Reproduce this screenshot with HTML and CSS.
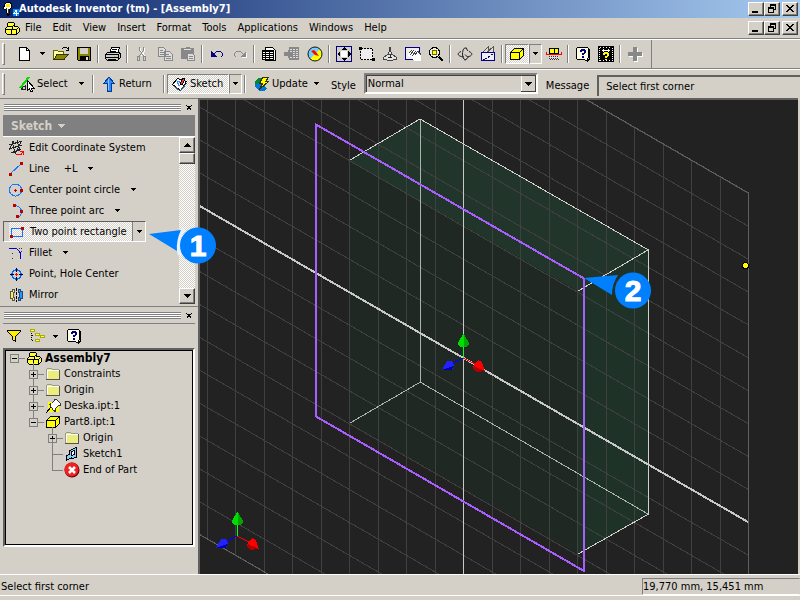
FILE: index.html
```
<!DOCTYPE html>
<html lang="en">
	<head>
		<meta charset="utf-8" />
		<title>Autodesk Inventor (tm) - [Assembly7]</title>
		<link rel="stylesheet" href="styles.css">
	</head>
	<body>
		<!-- shared symbols -->
		<svg class="defs" width="0" height="0" aria-hidden="true">
			<symbol id="assembly" viewBox="0 0 16 16">
				<path d="M1 9l2-2V4l2-2h4l1 1v3h3l2 2v4l-2 2H3l-2-2z" fill="#ff3" stroke="#000" />
				<path d="M1.500 9.500h11l2-2M7.500 9.500v5M3.500 6.500h5l2-2M8.500 6.500v3M12.500 9.500v4" fill="none" stroke="#000" />
			</symbol>
			<symbol id="cube" viewBox="0 0 16 16">
				<path d="M1.500 6.500l4-4h9v7l-4 4h-9z" fill="#ff0" stroke="#000" />
				<path d="M1.500 6.500h9l4-4M10.500 6.500v7" fill="none" stroke="#000" />
			</symbol>
			<symbol id="folder" viewBox="0 0 16 16">
				<path d="M1 4l1-1V2h5l1 2h6v10H1z" fill="#eded7c" />
				<path d="M1.500 13V3.500l1-1h4l1 1h6" fill="none" stroke="#999" />
				<path d="M2.500 12V4.500h11" fill="none" stroke="#fff" />
				<path d="M1 13.500h13.500V4" fill="none" stroke="#555" />
			</symbol>
			<symbol id="help" viewBox="0 0 16 16">
				<path d="M2.500 1.500h10l1 1v9l-1 1v3l-3-2h-7l-1-1v-10z" fill="#ffffe8" stroke="#000" />
				<path d="M14.500 3v10h-1v2" fill="none" stroke="#000" />
				<path d="M5 5V4h1V3h4v1h1v3h-1v1H9v1H7V7h2V5H7v1H5zM7 10h2v2H7z" fill="#000080" />
			</symbol>
			<symbol id="down" viewBox="0 0 5 3">
				<path d="M0 0h5v1H4v1H3v1H2V2H1V1H0z" fill="#000" />
			</symbol>
			<symbol id="min" viewBox="0 0 10 10"><path d="M1 7h6v2H1z" /></symbol>
			<symbol id="restore" viewBox="0 0 10 10">
				<path d="M3 0h6v6H7V5h1V2H4v1H3zM1 3h6v6H1zM2 5v3h4V5z" fill-rule="evenodd" />
			</symbol>
			<symbol id="close" viewBox="0 0 10 10">
				<path d="M1 1h2v1h1v1h2V2h1V1h2v1H8v1H7v1H6v1h1v1h1v1h1v1H7V7H6V6H4v1H3v1H1V7h1V6h1V5h1V4H3V3H2V2H1z" />
			</symbol>
			<symbol id="triad" viewBox="-25 -25 50 50">
				<path d="M.5 0v-15" stroke="#0f2" />
				<path d="M0 0l12 6" stroke="#f00" />
				<path d="M0 0l-13 7" stroke="#00f" />
				<path d="M0-24h1l5 9v2l-3 2h-5l-3-2v-2z" fill="#0d0" />
				<path d="M1-24l5 9v2l-3 2h-2z" fill="#00a800" />
				<path d="M15 2l4 2 3 9-9 1-3-3 1-5z" fill="#f00" />
				<path d="M11 8l11 5-9 1-3-3z" fill="#b00000" />
				<path d="M-16 3h5l2 4-2 5h-10z" fill="#22f" />
				<path d="M-10 8l-1 4h-10z" fill="#0000a8" />
			</symbol>
		</svg>

		<header class="titlebar">
			<svg class="app-icon" viewBox="0 0 18 18">
				<path d="M3.500 4.500l2-2h4l1 2v3l-2 2v5l-2 1-1-5-3-2z" fill="#fff" stroke="#000" />
				<path d="M5 4h4v3H5z" fill="#fe0" />
				<path d="M5.500 8v2M7.500 9v5" stroke="#333" />
				<path d="M12 9h6v7h-6z" fill="#08f" />
				<path d="M15.500 10v6M15 10.500l-2 3h5" stroke="#fff" fill="none" />
			</svg>
			<h1>Autodesk Inventor (tm) - [Assembly7]</h1>
			<div class="window-buttons">
				<button aria-label="Minimize"><svg><use href="#min" /></svg></button>
				<button aria-label="Restore"><svg><use href="#restore" /></svg></button>
				<button class="close" aria-label="Close"><svg><use href="#close" /></svg></button>
			</div>
		</header>

		<nav class="menubar">
			<svg class="icon"><use href="#assembly" /></svg>
			<button>File</button>
			<button>Edit</button>
			<button>View</button>
			<button>Insert</button>
			<button>Format</button>
			<button>Tools</button>
			<button>Applications</button>
			<button>Windows</button>
			<button>Help</button>
			<div class="window-buttons">
				<button aria-label="Minimize"><svg><use href="#min" /></svg></button>
				<button aria-label="Restore"><svg><use href="#restore" /></svg></button>
				<button class="close" aria-label="Close"><svg><use href="#close" /></svg></button>
			</div>
		</nav>

		<div class="toolbar-row">
			<div class="toolbar standard">
				<span class="grip"></span>
				<button class="tool" aria-label="New">
					<svg class="icon" viewBox="0 0 16 16"><path d="M2.500 1.500h7l3 3v10h-10z" fill="#fff" stroke="#000" /><path d="M9.500 1.500v3h3" fill="none" stroke="#000" /></svg>
				</button>
				<button class="arrow" aria-label="New options"><svg><use href="#down" /></svg></button>
				<button class="tool" aria-label="Open">
					<svg class="icon" viewBox="0 0 16 16"><path d="M.5 13.500v-9h4l1 1h5v3" fill="#ffa" stroke="#660" /><path d="M1 13.500l3-5h11l-4 5z" fill="#880" stroke="#330" /><path d="M9 3l2-2h2l2 2M15.500 1v3h-3" fill="none" stroke="#000" /></svg>
				</button>
				<button class="tool" aria-label="Save">
					<svg class="icon" viewBox="0 0 16 16"><path d="M1.500 1.500h13v13h-12l-1-1z" fill="#880" stroke="#000" /><path d="M4 2h8v6H4z" fill="#d4d0c8" /><path d="M4 10h9v4H4z" fill="#000" /><path d="M10 11h2v3h-2z" fill="#ddd" /></svg>
				</button>
				<span class="sep"></span>
				<button class="tool" aria-label="Print">
					<svg class="icon" viewBox="0 0 16 16"><path d="M4.500 7.500l2-6h8l-2 6" fill="#fff" stroke="#000" /><path d="M7 3.500h5M6 5.500h5" stroke="#000" /><path d="M.5 8.500l2-2h11l2 1v4l-3 3h-10l-2-2z" fill="#ccc" stroke="#000" /><path d="M1 8.500h12M1 11.500h12M13.500 8v6M3 13.500h8" stroke="#000" /><path d="M9 10.500h2" stroke="#cc0" /></svg>
				</button>
				<span class="sep"></span>
				<button class="tool" aria-label="Cut" disabled>
					<svg class="icon" viewBox="0 0 16 16"><path d="M6.500 2v3l4 5M10.500 2v3l-3 5" fill="none" stroke="#fff" /><path d="M5.500 1v3l4 6M9.500 1v3l-4 6" fill="none" stroke="#888" /><path d="M3.500 10.500h2v4h-2zM9.500 10.500h2v4h-2z" fill="none" stroke="#888" /></svg>
				</button>
				<button class="tool" aria-label="Copy" disabled>
					<svg class="icon" viewBox="0 0 16 16"><path d="M1.500 1.500h5l2 2v7h-7zM7.500 5.500h5l3 3v6h-8z" fill="#ddd" stroke="#888" /><path d="M3 4.500h3M3 6.500h4M3 8.500h4M9 8.500h3M9 10.500h5M9 12.500h5" stroke="#888" /></svg>
				</button>
				<button class="tool" aria-label="Paste" disabled>
					<svg class="icon" viewBox="0 0 16 16"><path d="M1 2h4l1-1h3l1 1h4v11H1z" fill="#888" /><path d="M4 3.500h7" stroke="#ddd" /><path d="M7.500 7.500h5l2 2v5h-7z" fill="#ddd" stroke="#888" /><path d="M9 10.500h4M9 12.500h4" stroke="#888" /></svg>
				</button>
				<span class="sep"></span>
				<button class="tool" aria-label="Undo">
					<svg class="icon" viewBox="0 0 16 16"><path d="M2 5v6h6z" fill="#000080" /><path d="M4.500 8.500l3-3h4l2 2v2l-2 2" fill="none" stroke="#000080" /></svg>
				</button>
				<button class="tool" aria-label="Redo" disabled>
					<svg class="icon" viewBox="0 0 16 16"><path d="M15 6v6H9z" fill="#fff" /><path d="M14 5v6H8z" fill="#888" /><path d="M11.500 8.500l-3-3h-4l-2 2v2l2 2" fill="none" stroke="#888" /></svg>
				</button>
				<span class="sep"></span>
				<button class="tool" aria-label="Parameters">
					<svg class="icon" viewBox="0 0 16 16"><path d="M4.500 1.500h7l3 3v10h-10z" fill="#fff" stroke="#000" /><path d="M1 4h12v10H1z" fill="#000" /><path d="M2 6.500h2M5 6.500h3M9 6.500h3M2 8.500h2M5 8.500h3M9 8.500h3M2 10.500h2M5 10.500h3M9 10.500h3M2 12.500h2M5 12.500h3M9 12.500h3" stroke="#fff" /></svg>
				</button>
				<button class="tool" aria-label="Import table" disabled>
					<svg class="icon" viewBox="0 0 16 16"><path d="M5 1h10v13H5z" fill="#888" /><path d="M6 3.500h2M9 3.500h2M12 3.500h2M6 5.500h2M9 5.500h2M12 5.500h2M9 7.500h2M12 7.500h2M9 9.500h2M12 9.500h2M6 11.500h2M9 11.500h2M12 11.500h2" stroke="#ddd" /><path d="M0 6h4V4l4 4-4 4v-2H0z" fill="#888" /></svg>
				</button>
				<button class="tool" aria-label="Catalog">
					<svg class="icon smooth" viewBox="0 0 16 16"><circle cx="8" cy="8" r="7" fill="#7cf" /><path d="M13 3a7 7 0 0 1-10 10z" fill="#ff0" /><circle cx="8" cy="8" r="7" fill="none" stroke="#111" /><path d="M4 5l3-1 2 2 3 4-4-1-3-3z" fill="#f00" /></svg>
				</button>
				<span class="sep"></span>
				<button class="tool" aria-label="Zoom all">
					<svg class="icon" viewBox="0 0 16 16"><path d="M.5.5h15v15H.5z" fill="#d4d0c8" stroke="#000080" /><path d="M5 5h6v6H5z" fill="#fff" /><path d="M8 1l3 3H5zM8 15l3-3H5zM1 8l3-3v6zM15 8l-3-3v6z" /></svg>
				</button>
				<button class="tool" aria-label="Zoom window">
					<svg class="icon" viewBox="0 0 16 16"><path d="M1.500 2.500h12v11h-12z" fill="#eee" stroke="#000" stroke-dasharray="2 1" /><path d="M0 1h3v3H0zM13 12h3v3h-3z" /></svg>
				</button>
				<button class="tool" aria-label="Zoom">
					<svg class="icon" viewBox="0 0 16 16"><path d="M7.500 1.500h1v4h-1zM7.500 5.500l-2 3h5l-2-3zM5.500 8.500l-4 3v2h3l1 1h5l1-1h3v-2l-4-3z" fill="#e4e4e4" stroke="#444" /><path d="M8 9v3M6 11.500h4" fill="none" stroke="#222" /></svg>
				</button>
				<button class="tool" aria-label="Pan">
					<svg class="icon" viewBox="0 0 16 16"><path d="M.5 1.500h14v12H.5z" fill="#eee" stroke="#000080" /><path d="M4 11l-1-3 4-4 2 1 4-1 3 5v6H9l-3-5z" fill="#fff" /><path d="M4 7l3-3M5 9l4-5M7 10l4-5M10 9l3-4M13 5l3 4" stroke="#444" /></svg>
				</button>
				<button class="tool" aria-label="Zoom selected">
					<svg class="icon" viewBox="0 0 16 16"><circle cx="6.500" cy="6.500" r="5" fill="#eee" stroke="#000" /><path d="M4.500 4.500h4v4h-4z" fill="#ff0" stroke="#660" /><path d="M11 11l4 4" stroke="#000" stroke-width="2" /></svg>
				</button>
				<span class="sep"></span>
				<button class="tool" aria-label="Rotate">
					<svg class="icon smooth" viewBox="0 0 16 16"><path d="M10 2.500C7 .5 5.500 4 5.500 8s2 7 4 5M4 5.500c-5 2-3 5 3 5.500M8 8.500l3 3-3 3M10 11c6-1 6-4 2-5.500M9 2l2 3" fill="none" stroke="#222" /></svg>
				</button>
				<button class="tool" aria-label="Look at">
					<svg class="icon" viewBox="0 0 16 16"><path d="M1.500 6.500h13v8h-13z" fill="#eee" stroke="#000080" /><path d="M3 6l5-5v5M7 6l6-5v5" fill="#ddd" stroke="#555" /><path d="M3 13.500h2l8-6" fill="none" stroke="#000080" stroke-dasharray="2 1" /></svg>
				</button>
				<span class="sep"></span>
				<button class="tool pressed" aria-label="Shaded display"><svg class="icon"><use href="#cube" /></svg></button>
				<button class="arrow framed" aria-label="Display options"><svg><use href="#down" /></svg></button>
				<button class="tool" aria-label="Section view">
					<svg class="icon" viewBox="0 0 16 16"><path d="M3.500 2.500h9v5h-9z" fill="#ff0" stroke="#000" /><path d="M8 3v5" stroke="#000" /><path d="M3 10h10v4H3z" fill="#ddd" /><path d="M3 10.500h10M3 12.500h10M4 13.500h9" stroke="#333" stroke-dasharray="1 1" /><path d="M.5 6v2.500h15V6" fill="none" stroke="#f00" /></svg>
				</button>
				<span class="sep"></span>
				<button class="tool" aria-label="Help topics"><svg class="icon"><use href="#help" /></svg></button>
				<button class="tool" aria-label="Visual syllabus">
					<svg class="icon" viewBox="0 0 16 16"><path d="M0 0h16v16H0z" /><path d="M4 4.500h8M5.500 3v3M10.500 3v3" stroke="#fff" /><path d="M1.500 2v13M14.500 2v13" stroke="#fff" stroke-dasharray="1 1" /><path d="M2 1.500h12M2 14.500h12" stroke="#fff" stroke-dasharray="1 2" /><path d="M5 9V7h1V6h4v1h1v3h-1v1H9v1H7v-2h2V8H7v1zM7 13h2v1H7z" fill="#ff0" /></svg>
				</button>
				<span class="sep"></span>
				<button class="tool" aria-label="Add" disabled>
					<svg class="icon" viewBox="0 0 16 16"><path d="M7 2h4v5h5v4h-5v5H7v-5H2V7h5z" fill="#fff" /><path d="M6 1h4v5h5v4h-5v5H6v-5H1V6h5z" fill="#888" /></svg>
				</button>
			</div>
		</div>

		<div class="toolbar-row command-row">
			<span class="grip"></span>
			<button class="command select-button">
				<svg class="icon" viewBox="0 0 16 16"><path d="M1 12L10 1" stroke="#0d0" stroke-width="2" /><path d="M3.500 11.500l3-2v4h-4z" fill="none" stroke="#222" /><path d="M8.500 4.500v10l2-2 1 3h2l-1-3h3z" fill="#fff" stroke="#000" /></svg>
				Select
			</button>
			<button class="arrow" aria-label="Select options"><svg><use href="#down" /></svg></button>
			<span class="sep"></span>
			<button class="command return-button">
				<svg class="icon" viewBox="0 0 16 16"><path d="M8 1l5 6h-3v8H6V7H3z" fill="#38f" stroke="#003c9c" /><path d="M7.500 3v11" stroke="#8cf" /></svg>
				Return
			</button>
			<span class="sep"></span>
			<button class="command pressed sketch-button">
				<svg class="icon" viewBox="0 0 16 16"><path d="M.5 8.500l5-6 9 3-6 9z" fill="#fff" stroke="#000" /><path d="M2 10l6 5 7-8" fill="none" stroke="#357" /><path d="M5 5l5 2-3 3z" fill="none" stroke="#48f" /><path d="M8 8l3-6 2 1-3 6z" fill="#f33" stroke="#000" /></svg>
				Sketch
			</button>
			<button class="arrow framed" aria-label="Sketch options"><svg><use href="#down" /></svg></button>
			<span class="sep"></span>
			<button class="command update-button">
				<svg class="icon" viewBox="0 0 16 16"><path d="M1 5l3-3h5v9H2z" fill="#083" /><path d="M1 8l4-1 8 5-3 3H5l-4-4z" fill="#07d" /><path d="M8.500 1.500h6l-3 4h3l-9 8 3-6h-3z" fill="#ff0" stroke="#330" /></svg>
				Update
			</button>
			<button class="arrow" aria-label="Update options"><svg><use href="#down" /></svg></button>
			<label for="style">Style</label>
			<select id="style">
				<option>Normal</option>
			</select>
			<label for="message">Message</label>
			<input id="message" type="text" value="Select first corner" readonly />
		</div>

		<main class="workspace">
			<aside class="sidebar">
				<section class="panel tools-panel">
					<div class="panel-grip"><span></span><button aria-label="Close panel"><svg><use href="#close" /></svg></button></div>
					<button class="panel-title">Sketch <svg><path d="M0 0h8L4 4z" fill="#d4d0c8" /></svg></button>
					<div class="tool-area">
						<ul class="tool-list">
							<li>
								<button><svg class="icon" viewBox="0 0 16 16"><path d="M4 1l3 12M9 0l3 11M1 5l13-4M1 9l13-4M3 13l10-4M6 1l-5 9M13 2L7 14" stroke="#222" fill="none" /><path d="M8 14.500h5l2-3M12 11.500h3v3" stroke="#f00" fill="none" /></svg>Edit Coordinate System</button>
							</li>
							<li>
								<button><svg class="icon" viewBox="0 0 16 16"><path d="M2 13L13 3" stroke="#17f" /><path d="M1 12h3v3H1zM12 1h3v3h-3z" fill="#b00" /></svg>Line <kbd>+L</kbd></button>
								<button class="arrow" aria-label="Line options"><svg><use href="#down" /></svg></button>
							</li>
							<li>
								<button><svg class="icon" viewBox="0 0 16 16"><circle cx="7.500" cy="8" r="6" fill="none" stroke="#17f" /><path d="M6 8h3v1H6zM7 7h1v3H7zM12 7h3v3h-3z" fill="#b00" /></svg>Center point circle</button>
								<button class="arrow" aria-label="Circle options"><svg><use href="#down" /></svg></button>
							</li>
							<li>
								<button><svg class="icon" viewBox="0 0 16 16"><path d="M6 2.500c8 0 10 8 4 12" fill="none" stroke="#17f" /><path d="M5 1h3v3H5zM12 7h3v3h-3zM8 12h3v3H8z" fill="#b00" /></svg>Three point arc</button>
								<button class="arrow" aria-label="Arc options"><svg><use href="#down" /></svg></button>
							</li>
							<li class="active">
								<button><svg class="icon" viewBox="0 0 16 16"><path d="M2.500 4.500h11v8h-11z" fill="none" stroke="#17f" /><path d="M1 11h3v3H1zM12 3h3v3h-3z" fill="#b00" /></svg>Two point rectangle</button>
								<button class="arrow" aria-label="Rectangle options"><svg><use href="#down" /></svg></button>
							</li>
							<li>
								<button><svg class="icon" viewBox="0 0 16 16"><path d="M1 3.500h5c5 0 7 4 7 10" fill="none" stroke="#00c" /><path d="M8 3.500h6M13.500 3v5M4.500 8v1M4.500 13v1" fill="none" stroke="#333" stroke-dasharray="1 2" /></svg>Fillet</button>
								<button class="arrow" aria-label="Fillet options"><svg><use href="#down" /></svg></button>
							</li>
							<li>
								<button><svg class="icon" viewBox="0 0 16 16"><circle cx="8.500" cy="8.500" r="4.500" fill="none" stroke="#06f" stroke-width="1.500" /><path d="M8.500 2v4M8.500 11v4M2 8.500h4M11 8.500h4" stroke="#000" /><path d="M7 8h3v1H7zM8 7h1v3H8z" fill="#f00" /></svg>Point, Hole Center</button>
							</li>
							<li>
								<button><svg class="icon" viewBox="0 0 16 16"><path d="M6.500 2.500h-2v2h-2v7h2v2h2v-3h-1v-5h1z" fill="#fe5" stroke="#555" /><path d="M10.500 2.500h2v2h2v7h-2v2h-2v-3h1v-5h-1z" fill="#29f" stroke="#247" /><path d="M8.500 1v14" stroke="#000" stroke-dasharray="3 1" /></svg>Mirror</button>
							</li>
						</ul>
						<div class="scrollbar">
							<button aria-label="Scroll up"><svg class="up" viewBox="0 0 7 4"><path d="M3 0h1v1h1v1h1v1h1v1H0V3h1V2h1V1h1z" /></svg></button>
							<span class="thumb"></span>
							<button aria-label="Scroll down"><svg class="up" viewBox="0 0 7 4"><path d="M0 0h7v1H6v1H5v1H4v1H3V3H2V2H1V1H0z" /></svg></button>
						</div>
					</div>
				</section>

				<section class="panel browser-panel">
					<div class="panel-grip"><span></span><button aria-label="Close browser"><svg><use href="#close" /></svg></button></div>
					<div class="browser-tools">
						<button aria-label="Filter"><svg class="icon" viewBox="0 0 16 16"><path d="M1.500 2.500h13v1l-5 5v5l-3-2v-3l-5-5z" fill="#fe0" stroke="#000" /></svg></button>
						<button aria-label="Tree view"><svg class="icon" viewBox="0 0 16 16"><path d="M1 1h5v3H1zM6 5h5v3H6zM11 7h5v3h-5zM6 11h5v3H6z" fill="#aa0" /><path d="M2 2h3v1H2zM7 6h3v1H7zM12 8h3v1h-3zM7 12h3v1H7z" fill="#ff6" /><path d="M2.500 5v8M3 7.500h2M3 12.500h2" stroke="#000" stroke-dasharray="1 1" /></svg></button>
						<button class="arrow" aria-label="Tree options"><svg><use href="#down" /></svg></button>
						<button aria-label="Browser help"><svg class="icon"><use href="#help" /></svg></button>
					</div>
					<div class="tree-box">
						<ul class="tree">
							<li><span class="row root"><i class="toggle minus"></i><svg class="icon"><use href="#assembly" /></svg>Assembly7</span>
								<ul>
									<li><span class="row"><i class="toggle"></i><svg class="icon"><use href="#folder" /></svg>Constraints</span></li>
									<li><span class="row"><i class="toggle"></i><svg class="icon"><use href="#folder" /></svg>Origin</span></li>
									<li><span class="row"><i class="toggle"></i><svg class="icon" viewBox="0 0 16 16"><path d="M3 4h7l4 4v6H3z" fill="#ff0" /><path d="M1 15l5-6" stroke="#000" /><path d="M4.500 6.500l2-1 3-3v-1h2l4 4v2h-2l-3 3v3l-2-1z" fill="#fff" stroke="#333" /></svg>Deska.ipt:1</span></li>
									<li><span class="row"><i class="toggle minus"></i><svg class="icon"><use href="#cube" /></svg>Part8.ipt:1</span>
										<ul>
											<li><span class="row"><i class="toggle"></i><svg class="icon"><use href="#folder" /></svg>Origin</span></li>
											<li><span class="row"><i class="toggle leaf"></i><svg class="icon" viewBox="0 0 16 16"><path d="M2.500 14.500v-5l3-1v-4l7-3v10l-5 1v-1z" fill="#8cf" stroke="#000" /><path d="M7.500 9.500v-4l3-1v4z" fill="#fff" stroke="#000" /></svg>Sketch1</span></li>
											<li><span class="row"><i class="toggle leaf"></i><svg class="icon smooth" viewBox="0 0 16 16"><circle cx="8" cy="8" r="7.500" fill="#600" /><circle cx="7.500" cy="7.500" r="7" fill="#e22" /><path d="M5 5l6 6M11 5l-6 6" stroke="#fff" stroke-width="2.500" /></svg>End of Part</span></li>
										</ul>
									</li>
								</ul>
							</li>
						</ul>
					</div>
				</section>
			</aside>

			<section class="viewport">
				<svg class="scene" viewBox="200 100 598 474" preserveAspectRatio="xMinYMin slice">
					<!-- solid faces -->
					<path d="M349 160L578 291V554L349 423z" fill="#1f2822" />
					<path d="M349 160L420 119 648 250 578 291z" fill="#21352b" />
					<path d="M578 291L648 250V514L578 554z" fill="#1f3227" />
					<g id="grid" class="grid"></g>
					<path class="grid-edge" d="M178-136L748.500 193V851M178 522L748 851" />
					<!-- solid edges -->
					<path class="edge hidden" d="M420.500 119V382L350 423M420 382L648 514" />
					<path class="edge" d="M350 160L420 119 648.500 250V514L578 554M648 250L578 291" />
					<!-- sketch axes -->
					<path class="axis" d="M463.500 100V574" />
					<path class="axis diagonal" d="M178 193.500L748 522" />
					<path class="rectangle" d="M316 124.500L584 278.500V571L316 416.500z" />
					<use href="#triad" x="438" y="333" width="50" height="50" />
					<use href="#triad" x="212" y="511" width="50" height="50" />
					<circle cx="745.500" cy="265.500" r="3" fill="#ff0" stroke="#000" />
				</svg>
			</section>

			<svg class="callouts" viewBox="0 98 800 476" preserveAspectRatio="xMinYMin slice">
				<path class="halo" d="M183 229q-8 12-3 26" />
				<path d="M149 234l32-4q-5 10-4 21z" />
				<circle cx="198" cy="245.500" r="18" />
				<text x="198" y="256">1</text>
				<path d="M584 278l34-3q-6 9-6 20z" />
				<circle cx="633" cy="290.500" r="18" />
				<text x="633" y="301">2</text>
			</svg>
		</main>

		<footer class="statusbar">
			<span>Select first corner</span>
			<output>19,770 mm, 15,451 mm</output>
		</footer>

		<script>
			// 20 x 20 grid around the origin, seen in isometric view
			const originX = 463.5;
			const originY = 358;
			const stepX = 28.5;
			const stepY = 32.9;
			const slope = 0.577;
			let lines = "";

			for (let i = -10; i <= 10; i++) {
				const x = Math.floor(originX + i * stepX) + 0.5;
				const mid = originY + i * stepX * slope;
				lines += `<path d="M${x} ${mid - 10 * stepY}V${mid + 10 * stepY}" />`;

				const left = originY + i * stepY - 10 * stepX * slope;
				const right = originY + i * stepY + 10 * stepX * slope;
				lines += `<path d="M${originX - 285} ${left}L${originX + 285} ${right}" />`;
			}
			document.getElementById("grid").innerHTML = lines;
		</script>
	</body>
</html>
```
FILE: styles.css
```
* {
	box-sizing: border-box;
}
body {
	margin: 0;
	height: 100vh;
	display: flex;
	flex-direction: column;
	overflow: hidden;
	background: #d4d0c8;
	color: #000;
	font-family: Tahoma, "DejaVu Sans Condensed", "DejaVu Sans", sans-serif;
	font-size: 11px;
	line-height: 16px;
}
button,
select,
input {
	font: inherit;
	color: inherit;
}
button {
	display: flex;
	align-items: center;
	padding: 0;
	border: none;
	background: none;
	white-space: nowrap;
}
svg {
	display: block;
	flex: none;
	shape-rendering: crispEdges;
}
.defs {
	position: absolute;
}
.icon {
	width: 16px;
	height: 16px;
}
.smooth {
	shape-rendering: auto;
}
ul {
	list-style: none;
	margin: 0;
	padding: 0;
}

/* title bar and menu */
.titlebar {
	display: flex;
	align-items: center;
	height: 18px;
	padding: 0 2px 0 1px;
	background: linear-gradient(to right, #0a246a, #a6caf0);
	color: #fff;
}
.app-icon {
	width: 18px;
	height: 18px;
}
h1 {
	flex: 1;
	margin: 0;
	font-size: 11px;
	font-weight: bold;
}
.window-buttons {
	display: flex;
	margin-left: auto;
}
.window-buttons button {
	width: 16px;
	height: 14px;
	padding: 0 2px;
	background: #d4d0c8;
	border: 1px solid;
	border-color: #fff #404040 #404040 #fff;
	box-shadow: inset -1px -1px #808080;
}
.window-buttons .close {
	margin-left: 2px;
}
.window-buttons svg {
	width: 10px;
	height: 10px;
}
.menubar {
	display: flex;
	align-items: center;
	height: 20px;
	padding: 0 2px 0 4px;
}
.menubar > button {
	padding: 0 6px 0 5px;
}

/* toolbars */
.toolbar-row {
	display: flex;
	align-items: center;
	height: 30px;
	border-top: 1px solid #808080;
	box-shadow: inset 0 1px #fff;
}
.toolbar {
	display: flex;
	align-items: center;
	height: 28px;
	padding-right: 5px;
	border-right: 1px solid #808080;
}
.grip {
	width: 3px;
	height: 22px;
	margin: 0 8px 0 2px;
	border: 1px solid;
	border-color: #fff #808080 #808080 #fff;
}
.sep {
	width: 2px;
	height: 18px;
	margin: 0 2px;
	border-left: 1px solid #808080;
	border-right: 1px solid #fff;
}
.tool {
	justify-content: center;
	width: 23px;
	height: 24px;
}
.arrow {
	justify-content: center;
	width: 13px;
	height: 20px;
}
.arrow svg {
	width: 5px;
	height: 3px;
}
.pressed {
	background: repeating-conic-gradient(#fff 0 25%, #d4d0c8 0 50%) 0 0 / 2px 2px;
	border: 1px solid;
	border-color: #808080 #fff #fff #808080;
}
.tool.pressed {
	width: 24px;
	height: 20px;
}
.framed {
	border: 1px solid;
	border-color: #808080 #fff #fff #808080;
}
.command {
	gap: 2px;
	height: 20px;
}
.select-button {
	width: 62px;
	padding-left: 6px;
}
.select-button + .arrow {
	margin-right: 2px;
}
.return-button {
	width: 65px;
	padding-left: 5px;
}
.sketch-button {
	width: 62px;
	padding-left: 4px;
}
.update-button {
	width: 62px;
	padding-left: 6px;
}
.command-row label {
	padding: 4px 8px 0 8px;
}
#style {
	width: 174px;
	height: 21px;
	padding: 0 2px;
	appearance: none;
	border: 2px solid;
	border-color: #808080 #fff #fff #808080;
	border-radius: 0;
	outline: 0;
	background: url("data:image/svg+xml,%3Csvg xmlns='http://www.w3.org/2000/svg' width='15' height='17' shape-rendering='crispEdges'%3E%3Cpath d='M0 0h15v17H0z' fill='%23404040'/%3E%3Cpath d='M0 0h14v16H0z' fill='%23fff'/%3E%3Cpath d='M1 1h13v15H1z' fill='%23d4d0c8'/%3E%3Cpath d='M4 7h7v1h-1v1H9v1H8v1H7v-1H6V9H5V8H4z'/%3E%3C/svg%3E") right center no-repeat;
	box-shadow: inset 1px 1px #404040;
}
#message {
	flex: 1;
	min-width: 0;
	height: 21px;
	margin-top: 3px;
	padding: 0 7px;
	border: 0;
	border-top: 2px solid #606060;
	border-left: 2px solid #606060;
	background: none;
	outline: 0;
}

/* work area */
.workspace {
	position: relative;
	flex: 1;
	display: flex;
	min-height: 0;
}
.sidebar {
	display: flex;
	flex-direction: column;
	width: 200px;
	border-right: 2px solid #606060;
}
.panel {
	padding: 2px 3px 0 3px;
	border-top: 1px solid #808080;
}
.panel-grip {
	display: flex;
	align-items: center;
	height: 13px;
	gap: 4px;
}
.panel-grip span {
	flex: 1;
	height: 7px;
	margin-left: 1px;
	border-top: 3px double #808080;
	border-bottom: 3px double #808080;
	background: #fff;
}
.panel-grip svg {
	width: 8px;
	height: 8px;
	margin-right: 2px;
}
.panel-title {
	width: 100%;
	height: 21px;
	margin-top: 1px;
	gap: 5px;
	padding: 0 8px;
	background: #808080;
	color: #d4d0c8;
	font-size: 12px;
	font-weight: bold;
}
.panel-title svg {
	width: 8px;
	height: 4px;
}
.tool-area {
	display: flex;
	height: 170px;
	padding-bottom: 2px;
	border-top: 1px solid #fff;
}
.tool-list {
	flex: 1;
}
.tool-list li {
	display: flex;
	align-items: center;
	height: 21px;
	padding-left: 5px;
}
.tool-list li > button:first-child {
	gap: 5px;
	height: 19px;
}
.tool-list .arrow {
	margin-left: 7px;
}
.tool-list kbd {
	margin-left: 9px;
	font: inherit;
}
.tool-list .active {
	width: 143px;
	border: 1px solid;
	border-color: #606060 #fff #fff #606060;
}
.tool-list .active button:first-child {
	flex: 1;
	background: repeating-conic-gradient(#fff 0 25%, #d4d0c8 0 50%) 0 0 / 2px 2px;
}
.tool-list .active .arrow {
	height: 19px;
	margin: 0;
	border-left: 1px solid #808080;
}
.scrollbar {
	display: flex;
	flex-direction: column;
	width: 16px;
	background: repeating-conic-gradient(#fff 0 25%, #d4d0c8 0 50%) 0 0 / 2px 2px;
}
.scrollbar button,
.thumb {
	justify-content: center;
	height: 16px;
	background: #d4d0c8;
	border: 1px solid;
	border-color: #fff #404040 #404040 #fff;
	box-shadow: inset -1px -1px #808080;
}
.thumb {
	height: 11px;
	margin-bottom: auto;
}
.up {
	width: 7px;
	height: 4px;
}

/* model browser */
.browser-panel {
	display: flex;
	flex: 1;
	flex-direction: column;
	min-height: 0;
	padding-bottom: 27px;
}
.browser-tools {
	display: flex;
	align-items: center;
	height: 25px;
	margin-top: 1px;
	padding-left: 3px;
	gap: 7px;
	border-top: 1px solid #808080;
}
.browser-tools .arrow {
	margin: 0 -3px;
}
.tree-box {
	flex: 1;
	min-height: 0;
	padding: 0 5px;
	border: 2px solid;
	border-color: #606060 #fff #fff #606060;
	box-shadow: inset 0 0 0 1px #000;
}
.tree ul {
	margin-left: 19px;
}
.row {
	display: flex;
	align-items: center;
	height: 16px;
}
.row .icon {
	margin: 0 3px 0 7px;
}
.root {
	font-size: 12px;
	font-weight: bold;
}
.toggle {
	position: relative;
	width: 9px;
	height: 9px;
	border: 1px solid #808080;
	background: linear-gradient(#000, #000) center / 5px 1px no-repeat,
		linear-gradient(#000, #000) center / 1px 5px no-repeat, #d4d0c8;
}
.toggle.minus {
	background: linear-gradient(#000, #000) center / 5px 1px no-repeat;
}
.toggle.leaf {
	border-color: transparent;
	background: none;
}
/* connector lines */
.toggle::after {
	content: "";
	position: absolute;
	top: 3px;
	left: 8px;
	width: 6px;
	border-top: 1px solid #808080;
}
.toggle.leaf::after {
	left: 3px;
	width: 11px;
}
.tree ul .toggle::before {
	content: "";
	position: absolute;
	left: 3px;
	bottom: 8px;
	height: 7px;
	border-left: 1px solid #808080;
}
.tree ul .toggle.leaf::before {
	bottom: 3px;
	height: 16px;
}

/* 3D view */
.viewport {
	flex: 1;
	min-width: 0;
	margin-right: 2px;
	border-top: 2px solid #606060;
	background: #222;
}
.scene {
	width: 100%;
	height: 100%;
}
.grid {
	stroke: #404040;
	fill: none;
}
.grid-edge {
	stroke: #606060;
	fill: none;
}
.edge {
	stroke: #d0d0d0;
	fill: none;
}
.edge.hidden {
	stroke: #a8b4ac;
}
.axis {
	stroke: #c8c8c8;
}
.axis.diagonal {
	stroke-width: 2;
}
.rectangle {
	stroke: #a95fff;
	stroke-width: 2;
	fill: none;
}
.callouts {
	position: absolute;
	top: 0;
	left: 0;
	width: 100%;
	height: 100%;
	pointer-events: none;
	shape-rendering: auto;
	fill: #0080ff;
}
.callouts .halo {
	fill: none;
	stroke: #e8f2fc;
	stroke-width: 4;
}
.callouts text {
	fill: #fff;
	stroke: #fff;
	stroke-width: 1;
	font-family: "Liberation Sans", Arial, sans-serif;
	font-size: 30px;
	font-weight: bold;
	text-anchor: middle;
}

.statusbar {
	display: flex;
	align-items: center;
	height: 26px;
	padding: 0 0 2px 1px;
	border-top: 1px solid #fff;
	box-shadow: inset 0 -4px #d4d0c8, inset 0 -5px #fff;
}
.statusbar output {
	width: 158px;
	height: 17px;
	margin-left: auto;
	line-height: 15px;
	border: 1px solid;
	border-color: #808080 transparent #fff #808080;
}
```
